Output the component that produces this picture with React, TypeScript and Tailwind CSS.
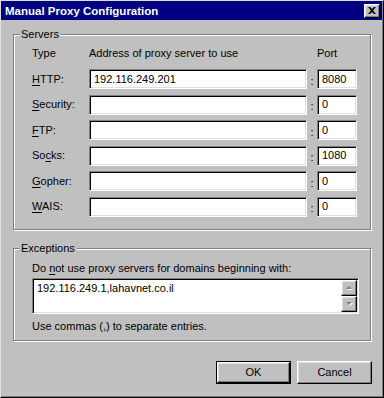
import React from "react";

const sunken =
  "bg-white border border-t-[#808080] border-l-[#808080] border-b-white border-r-white shadow-[inset_1px_1px_0_#000,inset_-1px_-1px_0_#dfdfdf]";
const raised =
  "bg-[#c0c0c0] border border-t-white border-l-white border-b-black border-r-black shadow-[inset_-1px_-1px_0_#808080,inset_1px_1px_0_#dfdfdf]";
const etched =
  "border border-[#808080] shadow-[inset_1px_1px_0_#fff,1px_1px_0_#fff]";

function Label({ pre, u, post }: { pre: string; u: string; post: string }) {
  return (
    <span>
      {pre}
      <span className="underline underline-offset-[2px]">{u}</span>
      {post}
    </span>
  );
}

const rows: { pre: string; u: string; post: string; addr: string; port: string }[] = [
  { pre: "", u: "H", post: "TTP:", addr: "192.116.249.201", port: "8080" },
  { pre: "", u: "S", post: "ecurity:", addr: "", port: "0" },
  { pre: "", u: "F", post: "TP:", addr: "", port: "0" },
  { pre: "So", u: "c", post: "ks:", addr: "", port: "1080" },
  { pre: "", u: "G", post: "opher:", addr: "", port: "0" },
  { pre: "", u: "W", post: "AIS:", addr: "", port: "0" },
];

export default function App() {
  return (
    <div
      className="w-[384px] h-[398px] bg-[#c0c0c0] border border-t-[#dfdfdf] border-l-[#dfdfdf] border-r-black border-b-black shadow-[inset_-1px_-1px_0_#808080] text-black text-[11px] leading-[13px] flex flex-col"
      style={{ fontFamily: '"Liberation Sans", Arial, sans-serif' }}
    >
      {/* Title bar */}
      <div className="h-[19px] mr-[1px] bg-[#000080] flex items-center justify-between pl-[4px] pr-[2px]">
        <span className="text-white font-bold text-[11.5px] leading-[14px]">
          Manual Proxy Configuration
        </span>
        <div className={`${raised} w-[16px] h-[14px] flex items-center justify-center`}>
          <svg width="8" height="7" viewBox="0 0 8 7">
            <path d="M0 0h2l2 2 2-2h2L5 3.5 8 7H6L4 5 2 7H0l3-3.5z" fill="#000" />
          </svg>
        </div>
      </div>

      {/* Servers group */}
      <div className={`${etched} relative w-[358px] ml-[12px] mt-[14px] h-[196px] pt-[12px] pl-[18px]`}>
        <span className="absolute left-[5px] top-[-7px] bg-[#c0c0c0] px-[2px]">Servers</span>
        <div className="grid grid-cols-[57px_218px_10px_40px] items-center">
          <span>Type</span>
          <span>Address of proxy server to use</span>
          <span></span>
          <span>Port</span>
        </div>
        <div className="grid grid-cols-[57px_218px_10px_40px] auto-rows-[20px] gap-y-[5.6px] mt-[9px] items-center">
          {rows.map((r, i) => (
            <React.Fragment key={i}>
              <Label pre={r.pre} u={r.u} post={r.post} />
              <div className={`${sunken} h-[20px] pl-[4px] flex items-center`}>{r.addr}</div>
              <span className="text-center pt-[4px]">:</span>
              <div className={`${sunken} h-[20px] pl-[4px] flex items-center`}>{r.port}</div>
            </React.Fragment>
          ))}
        </div>
      </div>

      {/* Exceptions group */}
      <div className={`${etched} relative w-[358px] ml-[12px] mt-[18px] h-[93px] pt-[13px] pl-[18px]`}>
        <span className="absolute left-[5px] top-[-7px] bg-[#c0c0c0] px-[2px]">Exceptions</span>
        <div>
          Do <span className="underline underline-offset-[2px]">n</span>ot use proxy servers for domains beginning with:
        </div>
        <div className={`${sunken} mt-[3px] w-[327px] h-[36px] flex`}>
          <div className="flex-1 pl-[3px] pt-[2px] m-[1px]">192.116.249.1,lahavnet.co.il</div>
          <div className="w-[16px] my-[1px] mr-[1px] flex flex-col">
            <div className={`${raised} h-[16px] flex items-center justify-center`}>
              <svg width="7" height="5" viewBox="0 0 7 5">
                <path d="M4 1l3 3H1z" fill="#fff" />
                <path d="M3 0l3 3H0z" fill="#808080" />
              </svg>
            </div>
            <div className={`${raised} h-[16px] flex items-center justify-center`}>
              <svg width="7" height="5" viewBox="0 0 7 5">
                <path d="M1 1h6L4 4z" fill="#fff" />
                <path d="M0 0h6L3 3z" fill="#808080" />
              </svg>
            </div>
          </div>
        </div>
        <div className="mt-[6px]">Use commas (,) to separate entries.</div>
      </div>

      {/* Buttons */}
      <div className="flex justify-end gap-[6px] mt-[20px] pr-[11px]">
        <div className="w-[75px] h-[23px] border border-black">
          <div className={`${raised} w-full h-full flex items-center justify-center`}>OK</div>
        </div>
        <div className={`${raised} w-[75px] h-[23px] flex items-center justify-center`}>Cancel</div>
      </div>
    </div>
  );
}
